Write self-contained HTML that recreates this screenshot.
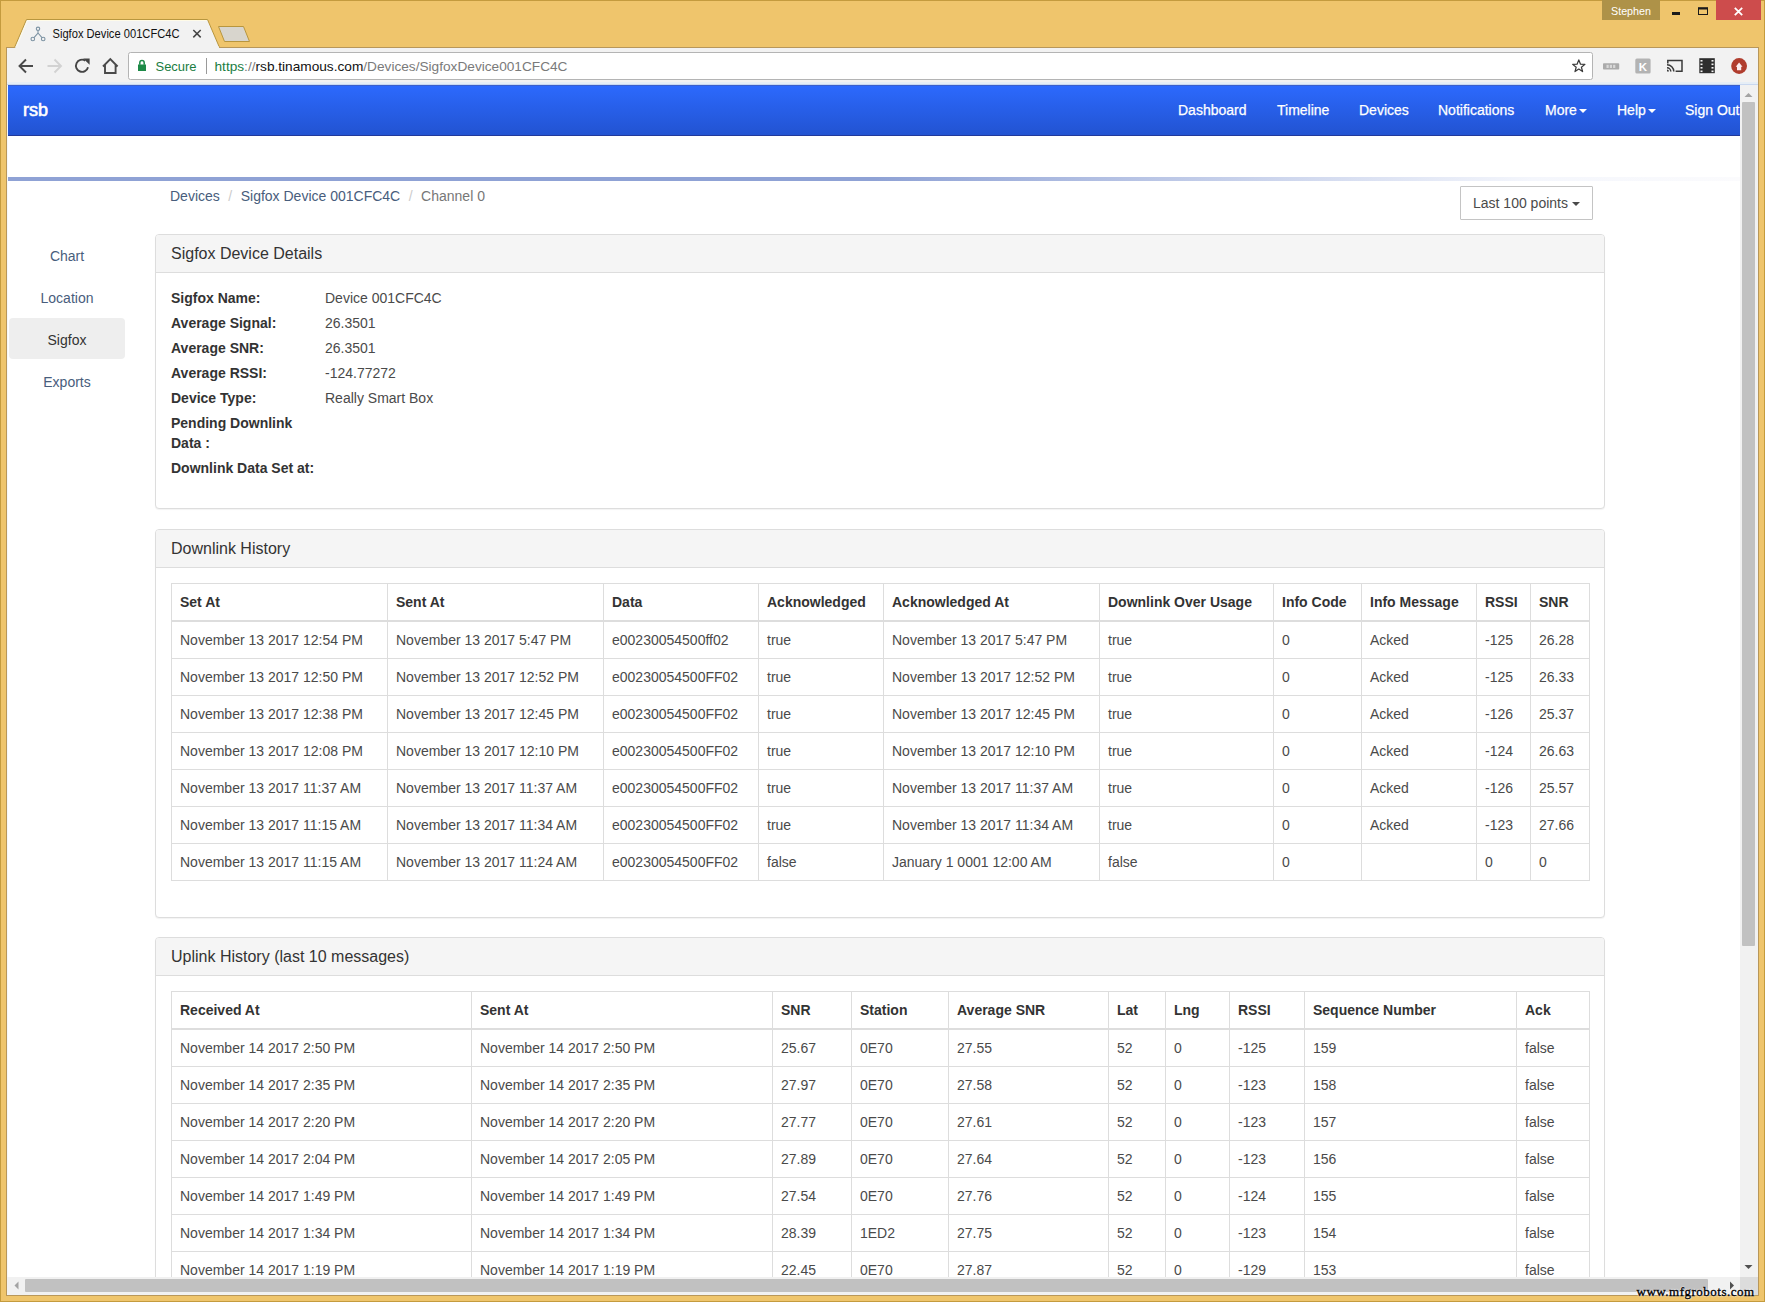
<!DOCTYPE html>
<html><head><meta charset="utf-8">
<style>
html,body{margin:0;padding:0;width:1765px;height:1302px;overflow:hidden;background:#efc56c;font-family:"Liberation Sans",sans-serif;}
*{box-sizing:border-box}
.a{position:absolute}
#vp{left:8px;top:85px;width:1732px;height:1192px;background:#fff;overflow:hidden;color:#4a4a4a;font-size:14px;line-height:20px}
#navbar{left:0;top:0;width:1732px;height:51px;border-top:1px solid #3a5fcc;border-bottom:1px solid #22399a;background:linear-gradient(#2c69fd,#2253d1)}
.nl{position:absolute;top:14px;color:#fff;font-size:14px;line-height:20px;white-space:nowrap;-webkit-text-stroke:0.25px #fff}
.caret{display:inline-block;width:0;height:0;margin-left:2px;vertical-align:middle;border-top:4px solid;border-right:4px solid transparent;border-left:4px solid transparent}
a{color:#485d7c;text-decoration:none}
.panel{position:absolute;left:147px;width:1450px;border:1px solid #ddd;border-radius:4px;background:#fff;box-shadow:0 1px 1px rgba(0,0,0,.05)}
.ph{height:38px;padding:10px 15px;background:#f5f5f5;border-bottom:1px solid #ddd;border-radius:3px 3px 0 0;font-size:16px;line-height:17px;color:#333}
.pb{padding:15px}
table{border-collapse:collapse;border-spacing:0;table-layout:fixed;width:1418px}
th,td{padding:8px;line-height:20px;border:1px solid #ddd;text-align:left;vertical-align:top;white-space:nowrap;overflow:hidden}
th{border-bottom-width:2px;font-weight:bold;vertical-align:bottom;color:#333}
.dt{position:absolute;left:15px;font-weight:bold;width:140px;color:#333}
.dd{position:absolute;left:169px}
</style></head><body>
<svg class="a" style="left:0;top:0" width="1765" height="1302" viewBox="0 0 1765 1302">
  <rect x="0.5" y="0.5" width="1764" height="1301" fill="#efc56c" stroke="#c49b3e" stroke-width="1"/>
  <rect x="6.5" y="47.5" width="1752" height="1248" fill="#f6f8fa" stroke="#b8975a" stroke-width="1"/>
  <!-- active tab -->
  <path d="M14.5 47.5 L26.5 19.5 L207.5 19.5 L219.5 47.5" fill="#f2f2f2" stroke="#b8963e" stroke-width="1"/>
  <path d="M16.5 46.5 L27.5 20.5 L206.5 20.5" fill="none" stroke="#fffbe8" stroke-width="1"/>
  <!-- new tab -->
  <path d="M218.5 26.5 L243.5 26.5 L249.5 41.5 L224.5 41.5 Z" fill="#d8d5cd" stroke="#b8963e" stroke-width="1"/>
  <!-- favicon -->
  <g fill="none" stroke="#7d93a3" stroke-width="1.1">
    <circle cx="38" cy="28.8" r="1.7"/><circle cx="32.8" cy="39" r="1.8"/><circle cx="43.2" cy="39" r="1.8"/>
    <path d="M38 30.5 L38 33 L34 37.6 M38 33 L42 37.6"/>
  </g>
  <text x="52.5" y="37.7" font-family="Liberation Sans" font-size="12" fill="#111" textLength="127" lengthAdjust="spacingAndGlyphs">Sigfox Device 001CFC4C</text>
  <path d="M193.3 30 L200.7 37.4 M200.7 30 L193.3 37.4" stroke="#444" stroke-width="1.5"/>
  <!-- window controls -->
  <rect x="1602" y="0" width="58" height="20" fill="#ae9248"/>
  <text x="1611" y="15" font-family="Liberation Sans" font-size="11.5" fill="#fff" textLength="40" lengthAdjust="spacingAndGlyphs">Stephen</text>
  <rect x="1672" y="12" width="8" height="3" fill="#1a1a1a"/>
  <rect x="1698.5" y="8.5" width="9" height="6" fill="none" stroke="#1a1a1a" stroke-width="1"/>
  <rect x="1698" y="7.2" width="10" height="2.3" fill="#1a1a1a"/>
  <rect x="1716" y="0" width="45" height="20" fill="#cd4c4c"/>
  <path d="M1734.8 7.8 L1742.2 15.2 M1742.2 7.8 L1734.8 15.2" stroke="#fff" stroke-width="1.8"/>
  <!-- toolbar -->
  <rect x="7" y="48" width="1751" height="37" fill="#f2f2f2"/>
  <rect x="15.5" y="46.5" width="203.5" height="2" fill="#f2f2f2"/>
  <rect x="7" y="82" width="1751" height="2" fill="#e6eef6"/>
  <rect x="7" y="84" width="1751" height="1" fill="#c9d8f0"/>
  <!-- nav icons -->
  <g fill="none" stroke="#4a4a4a" stroke-width="1.9" stroke-linecap="butt">
    <path d="M33 66 L19.8 66 M26 59.5 L19.5 66 L26 72.5"/>
  </g>
  <g fill="none" stroke="#d2d2d2" stroke-width="1.9">
    <path d="M47.5 66 L60.7 66 M54.5 59.5 L61 66 L54.5 72.5"/>
  </g>
  <path d="M85.3 60.6 A6.1 6.1 0 1 0 88 67.2" fill="none" stroke="#454545" stroke-width="1.9"/>
  <path d="M83.2 58.4 L89.6 58.4 L89.6 64.8 Z" fill="#454545"/>
  <path d="M103 66.5 L110.3 59.2 L117.6 66.5 M105 65 L105 73 L115.6 73 L115.6 65" fill="none" stroke="#4a4a4a" stroke-width="1.9"/>
  <!-- omnibox -->
  <rect x="128.5" y="52.5" width="1464" height="27" rx="2" fill="#fff" stroke="#b4b4b4" stroke-width="1"/>
  <rect x="138" y="64.5" width="8" height="6.5" fill="#1d8a47"/>
  <path d="M139.8 64.8 L139.8 62.8 A2.2 2.2 0 0 1 144.2 62.8 L144.2 64.8" fill="none" stroke="#1d8a47" stroke-width="1.5"/>
  <text x="155.5" y="71.2" font-family="Liberation Sans" font-size="13.6" fill="#1a7d42" textLength="41" lengthAdjust="spacingAndGlyphs">Secure</text>
  <rect x="206" y="58" width="1" height="16" fill="#9a9a9a"/>
  <text x="214.5" y="71.2" font-family="Liberation Sans" font-size="13.6" textLength="353" lengthAdjust="spacingAndGlyphs"><tspan fill="#1a7d42">https</tspan><tspan fill="#7a7a7a">://</tspan><tspan fill="#111">rsb.tinamous.com</tspan><tspan fill="#7a7a7a">/Devices/SigfoxDevice001CFC4C</tspan></text>
  <path transform="translate(1578.8 66) scale(0.9) translate(-1578.8 -66)" d="M1578.8 59.2 L1580.7 64 L1585.6 64.2 L1581.7 67.3 L1583 72.2 L1578.8 69.4 L1574.6 72.2 L1575.9 67.3 L1572 64.2 L1576.9 64 Z" fill="none" stroke="#3a3a3a" stroke-width="1.4" stroke-linejoin="round"/>
  <!-- extension icons -->
  <rect x="1603" y="63.2" width="16.2" height="6.4" rx="0.8" fill="#ababab"/>
  <g fill="#d9d9d9"><rect x="1606.5" y="64.8" width="2.2" height="3.2"/><rect x="1609.8" y="64.8" width="2.2" height="3.2"/><rect x="1613.1" y="64.8" width="2.2" height="3.2"/></g>
  <rect x="1635.3" y="58.5" width="15.3" height="15.1" rx="1.5" fill="#b3b3b3"/>
  <text x="1638.8" y="70.8" font-family="Liberation Sans" font-size="11.5" font-weight="bold" fill="#ffffff">K</text>
  <path d="M1667.8 63.4 L1667.8 60.4 L1682 60.4 L1682 71.2 L1675.6 71.2" fill="none" stroke="#3a3a3a" stroke-width="1.5"/>
  <path d="M1667 64.8 A6.8 6.8 0 0 1 1673.8 71.6 M1667 67.8 A3.8 3.8 0 0 1 1670.8 71.6" fill="none" stroke="#3a3a3a" stroke-width="1.5"/>
  <path d="M1667 69.6 A2 2 0 0 1 1669 71.6 L1667 71.6 Z" fill="#3a3a3a"/>
  <rect x="1699.3" y="58.2" width="15.5" height="15" fill="#2e2e2e"/>
  <g fill="#f2f2f2"><rect x="1700.5" y="60" width="2" height="1.6"/><rect x="1700.5" y="63.5" width="2" height="1.6"/><rect x="1700.5" y="67" width="2" height="1.6"/><rect x="1700.5" y="70.5" width="2" height="1.6"/>
  <rect x="1711.5" y="60" width="2" height="1.6"/><rect x="1711.5" y="63.5" width="2" height="1.6"/><rect x="1711.5" y="67" width="2" height="1.6"/><rect x="1711.5" y="70.5" width="2" height="1.6"/></g>
  <circle cx="1739.1" cy="66" r="7.9" fill="#b03d2e"/>
  <path d="M1739.1 62.6 L1742.5 66.7 L1741.2 66.7 L1741.2 70.3 L1737 70.3 L1737 66.7 L1735.7 66.7 Z" fill="#fbeef0"/>
  <!-- vertical scrollbar -->
  <rect x="1740" y="85" width="18" height="1192" fill="#f1f1f1"/>
  <rect x="1742" y="102" width="13" height="844" rx="1" fill="#c1c1c1"/>
  <path d="M1744.5 97 L1748.5 93 L1752.5 97 Z" fill="#a3a3a3"/>
  <path d="M1744.5 1265 L1748.5 1269 L1752.5 1265 Z" fill="#505050"/>
  <!-- horizontal scrollbar -->
  <rect x="7" y="1277" width="1751" height="18" fill="#f1f1f1"/>
  <rect x="25" y="1279" width="1683" height="13" rx="1" fill="#c1c1c1"/>
  <path d="M18.5 1281.5 L14.5 1285.5 L18.5 1289.5 Z" fill="#a3a3a3"/>
  <path d="M1730 1281.5 L1734 1285.5 L1730 1289.5 Z" fill="#505050"/>
  <rect x="1740" y="1277" width="18" height="18" fill="#dcdcdc"/>
</svg>
<div id="vp" class="a">
  <div id="navbar" class="a">
    <div class="nl" style="left:15px;top:14px;font-size:18px;-webkit-text-stroke:0.6px #fff">rsb</div>
    <div class="nl" style="left:1170px">Dashboard</div>
    <div class="nl" style="left:1269px">Timeline</div>
    <div class="nl" style="left:1351px">Devices</div>
    <div class="nl" style="left:1430px">Notifications</div>
    <div class="nl" style="left:1537px">More<span class="caret"></span></div>
    <div class="nl" style="left:1609px">Help<span class="caret"></span></div>
    <div class="nl" style="left:1677px">Sign Out</div>
  </div>
  <div class="a" style="left:0;top:92px;width:1732px;height:4px;background:linear-gradient(to right,#8fa2d5 0%,#8fa2d5 50%,#f4f6fc 88%,#fbfbfd 100%)"></div>

  <!-- breadcrumb -->
  <div class="a" style="left:162px;top:101px;white-space:nowrap">
    <a>Devices</a><span style="color:#ccc;padding:0 8.5px">/</span><a>Sigfox Device 001CFC4C</a><span style="color:#ccc;padding:0 8.5px">/</span><span style="color:#777">Channel 0</span>
  </div>
  <!-- left nav -->
  <div class="a" style="left:1px;top:233px;width:116px;height:41px;background:#eee;border-radius:4px"></div>
  <div class="a" style="left:1px;top:161px;width:116px;text-align:center"><a>Chart</a></div>
  <div class="a" style="left:1px;top:203px;width:116px;text-align:center"><a>Location</a></div>
  <div class="a" style="left:1px;top:245px;width:116px;text-align:center;color:#333">Sigfox</div>
  <div class="a" style="left:1px;top:287px;width:116px;text-align:center"><a>Exports</a></div>

  <!-- button -->
  <div class="a" style="left:1452px;top:101px;width:133px;height:34px;border:1px solid #c4c4c4;border-radius:1px;padding:6px 12px 6px 12px;white-space:nowrap">Last 100 points <span class="caret" style="margin-left:0"></span></div>

  <!-- panel 1 -->
  <div class="panel" style="top:149px;height:275px">
    <div class="ph">Sigfox Device Details</div>
    <div class="a" style="left:0;top:38px;width:1448px">
      <div class="dt" style="top:15px">Sigfox Name:</div><div class="dd" style="top:15px">Device 001CFC4C</div>
      <div class="dt" style="top:40px">Average Signal:</div><div class="dd" style="top:40px">26.3501</div>
      <div class="dt" style="top:65px">Average SNR:</div><div class="dd" style="top:65px">26.3501</div>
      <div class="dt" style="top:90px">Average RSSI:</div><div class="dd" style="top:90px">-124.77272</div>
      <div class="dt" style="top:115px">Device Type:</div><div class="dd" style="top:115px">Really Smart Box</div>
      <div class="dt" style="top:140px">Pending Downlink Data :</div>
      <div class="dt" style="top:185px;width:160px">Downlink Data Set at:</div>
    </div>
  </div>

  <!-- panel 2 -->
  <div class="panel" style="top:444px;height:389px">
    <div class="ph">Downlink History</div>
    <div class="pb">
    <table>
      <colgroup><col style="width:216px"><col style="width:216px"><col style="width:155px"><col style="width:125px"><col style="width:216px"><col style="width:174px"><col style="width:88px"><col style="width:115px"><col style="width:54px"><col style="width:59px"></colgroup>
      <thead><tr><th>Set At</th><th>Sent At</th><th>Data</th><th>Acknowledged</th><th>Acknowledged At</th><th>Downlink Over Usage</th><th>Info Code</th><th>Info Message</th><th>RSSI</th><th>SNR</th></tr></thead>
      <tbody>
      <tr><td>November 13 2017 12:54 PM</td><td>November 13 2017 5:47 PM</td><td>e00230054500ff02</td><td>true</td><td>November 13 2017 5:47 PM</td><td>true</td><td>0</td><td>Acked</td><td>-125</td><td>26.28</td></tr>
      <tr><td>November 13 2017 12:50 PM</td><td>November 13 2017 12:52 PM</td><td>e00230054500FF02</td><td>true</td><td>November 13 2017 12:52 PM</td><td>true</td><td>0</td><td>Acked</td><td>-125</td><td>26.33</td></tr>
      <tr><td>November 13 2017 12:38 PM</td><td>November 13 2017 12:45 PM</td><td>e00230054500FF02</td><td>true</td><td>November 13 2017 12:45 PM</td><td>true</td><td>0</td><td>Acked</td><td>-126</td><td>25.37</td></tr>
      <tr><td>November 13 2017 12:08 PM</td><td>November 13 2017 12:10 PM</td><td>e00230054500FF02</td><td>true</td><td>November 13 2017 12:10 PM</td><td>true</td><td>0</td><td>Acked</td><td>-124</td><td>26.63</td></tr>
      <tr><td>November 13 2017 11:37 AM</td><td>November 13 2017 11:37 AM</td><td>e00230054500FF02</td><td>true</td><td>November 13 2017 11:37 AM</td><td>true</td><td>0</td><td>Acked</td><td>-126</td><td>25.57</td></tr>
      <tr><td>November 13 2017 11:15 AM</td><td>November 13 2017 11:34 AM</td><td>e00230054500FF02</td><td>true</td><td>November 13 2017 11:34 AM</td><td>true</td><td>0</td><td>Acked</td><td>-123</td><td>27.66</td></tr>
      <tr><td>November 13 2017 11:15 AM</td><td>November 13 2017 11:24 AM</td><td>e00230054500FF02</td><td>false</td><td>January 1 0001 12:00 AM</td><td>false</td><td>0</td><td></td><td>0</td><td>0</td></tr>
      </tbody>
    </table>
    </div>
  </div>

  <!-- panel 3 -->
  <div class="panel" style="top:852px;height:500px">
    <div class="ph">Uplink History (last 10 messages)</div>
    <div class="pb">
    <table>
      <colgroup><col style="width:300px"><col style="width:301px"><col style="width:79px"><col style="width:97px"><col style="width:160px"><col style="width:57px"><col style="width:64px"><col style="width:75px"><col style="width:212px"><col style="width:73px"></colgroup>
      <thead><tr><th>Received At</th><th>Sent At</th><th>SNR</th><th>Station</th><th>Average SNR</th><th>Lat</th><th>Lng</th><th>RSSI</th><th>Sequence Number</th><th>Ack</th></tr></thead>
      <tbody>
      <tr><td>November 14 2017 2:50 PM</td><td>November 14 2017 2:50 PM</td><td>25.67</td><td>0E70</td><td>27.55</td><td>52</td><td>0</td><td>-125</td><td>159</td><td>false</td></tr>
      <tr><td>November 14 2017 2:35 PM</td><td>November 14 2017 2:35 PM</td><td>27.97</td><td>0E70</td><td>27.58</td><td>52</td><td>0</td><td>-123</td><td>158</td><td>false</td></tr>
      <tr><td>November 14 2017 2:20 PM</td><td>November 14 2017 2:20 PM</td><td>27.77</td><td>0E70</td><td>27.61</td><td>52</td><td>0</td><td>-123</td><td>157</td><td>false</td></tr>
      <tr><td>November 14 2017 2:04 PM</td><td>November 14 2017 2:05 PM</td><td>27.89</td><td>0E70</td><td>27.64</td><td>52</td><td>0</td><td>-123</td><td>156</td><td>false</td></tr>
      <tr><td>November 14 2017 1:49 PM</td><td>November 14 2017 1:49 PM</td><td>27.54</td><td>0E70</td><td>27.76</td><td>52</td><td>0</td><td>-124</td><td>155</td><td>false</td></tr>
      <tr><td>November 14 2017 1:34 PM</td><td>November 14 2017 1:34 PM</td><td>28.39</td><td>1ED2</td><td>27.75</td><td>52</td><td>0</td><td>-123</td><td>154</td><td>false</td></tr>
      <tr><td>November 14 2017 1:19 PM</td><td>November 14 2017 1:19 PM</td><td>22.45</td><td>0E70</td><td>27.87</td><td>52</td><td>0</td><td>-129</td><td>153</td><td>false</td></tr>
      <tr><td>November 14 2017 1:04 PM</td><td>November 14 2017 1:04 PM</td><td>27.40</td><td>0E70</td><td>27.90</td><td>52</td><td>0</td><td>-123</td><td>152</td><td>false</td></tr>
      </tbody>
    </table>
    </div>
  </div>
</div>
<div class="a" style="left:1636.5px;top:1284px;font-family:'Liberation Serif',serif;font-size:13px;letter-spacing:0.5px;line-height:16px;color:#000;white-space:nowrap;-webkit-text-stroke:0.35px #000;text-shadow:0 0 1px #fff,0 0 2px #fff,0 0 2px #fff">www.mfgrobots.com</div>
</body></html>
